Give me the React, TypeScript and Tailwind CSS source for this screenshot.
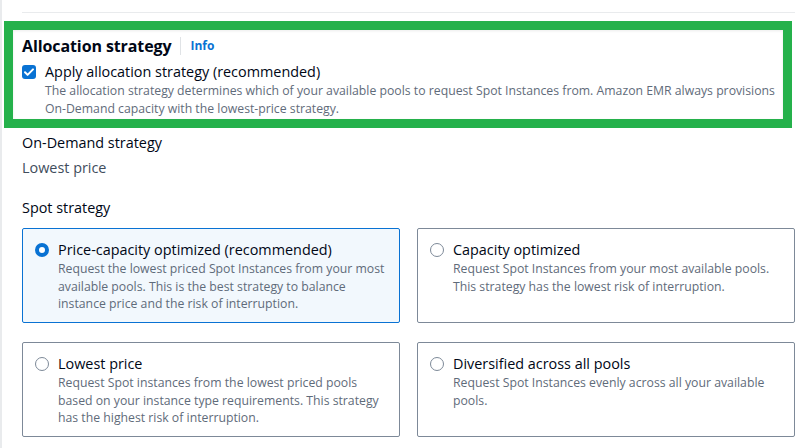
import { useState } from 'react';

interface StrategyOption {
  id: string;
  title: string;
  description: string;
}

const options: StrategyOption[] = [
  {
    id: 'price-capacity',
    title: 'Price-capacity optimized (recommended)',
    description:
      'Request the lowest priced Spot Instances from your most available pools. This is the best strategy to balance instance price and the risk of interruption.',
  },
  {
    id: 'capacity',
    title: 'Capacity optimized',
    description:
      'Request Spot Instances from your most available pools. This strategy has the lowest risk of interruption.',
  },
  {
    id: 'lowest-price',
    title: 'Lowest price',
    description:
      'Request Spot instances from the lowest priced pools based on your instance type requirements. This strategy has the highest risk of interruption.',
  },
  {
    id: 'diversified',
    title: 'Diversified across all pools',
    description: 'Request Spot Instances evenly across all your available pools.',
  },
];

function Radio({ checked }: { checked: boolean }) {
  return checked ? (
    <span className="mt-[3px] box-border size-[14px] shrink-0 rounded-full border-[4px] border-[#0972d3] bg-white" />
  ) : (
    <span className="mt-[3px] box-border size-[14px] shrink-0 rounded-full border-[1.5px] border-[#7d8998] bg-white" />
  );
}

export default function App() {
  const [selected, setSelected] = useState('price-capacity');
  const [apply, setApply] = useState(true);

  return (
    <div
      className="relative h-[448px] w-[809px] overflow-hidden border-l-2 border-[#e9ebed] bg-white text-[#000716]"
      style={{ fontFamily: '"Open Sans", "Noto Sans", Arial, sans-serif' }}
    >
      <div className="ml-[20px] mt-[12px] h-px w-[773px] bg-[#e9ebed]" />

      {/* Highlighted allocation strategy block */}
      <div className="ml-[2px] mt-[8px] w-[788px] border-[9px] border-[#25b14b] bg-white pb-px pl-[9px] pt-[5px] shadow-[inset_0_1px_3px_rgba(0,0,0,0.08)]">
        <div className="flex h-[22px] items-center">
          <h2 className="text-[16px] font-bold leading-[20px] tracking-[-0.1px]">Allocation strategy</h2>
          <span className="ml-[9px] mr-[9px] h-[18px] w-px bg-[#e0e3e6]" />
          <a className="text-[12px] font-bold leading-[16px] text-[#0972d3]">Info</a>
        </div>
        <label className="mt-[5px] flex cursor-pointer gap-[9px]" onClick={() => setApply(!apply)}>
          <span
            className={`mt-[3px] flex size-[14px] shrink-0 items-center justify-center rounded-[3px] ${
              apply ? 'bg-[#0972d3]' : 'border-2 border-[#7d8998] bg-white'
            }`}
          >
            {apply && (
              <svg viewBox="0 0 14 14" className="size-[14px]" fill="none">
                <path d="M3 7.3l2.6 2.6L11 4.4" stroke="white" strokeWidth="2" strokeLinecap="round" strokeLinejoin="round" />
              </svg>
            )}
          </span>
          <span>
            <span className="block text-[14.4px] leading-[20px]">Apply allocation strategy (recommended)</span>
            <span className="block text-[12.25px] leading-[18px] text-[#5f6b7a]">
              The allocation strategy determines which of your available pools to request Spot Instances from. Amazon EMR always provisions
              <br />
              On-Demand capacity with the lowest-price strategy.
            </span>
          </span>
        </label>
      </div>

      <div className="ml-[20px] mt-[5px] text-[14.4px] leading-[20px]">
        <div>On-Demand strategy</div>
        <div className="mt-[5px] text-[#414d5c]">Lowest price</div>
        <div className="mt-[20px]">Spot strategy</div>
      </div>

      <div className="ml-[20px] mt-[10px] grid w-[773px] grid-cols-2 gap-x-[17px] gap-y-[19px]">
        {options.map((opt) => {
          const checked = selected === opt.id;
          return (
            <button
              key={opt.id}
              onClick={() => setSelected(opt.id)}
              className={`flex h-[95px] gap-[9px] rounded-[2px] border pl-[12px] pr-[8px] pt-[11px] text-left ${
                checked ? 'border-[#0972d3] bg-[#f2f8fd]' : 'border-[#7d8998] bg-white'
              }`}
            >
              <Radio checked={checked} />
              <span>
                <span className="block text-[14.4px] leading-[20px]">{opt.title}</span>
                <span className="block text-[12.25px] leading-[17.5px] text-[#5f6b7a]">{opt.description}</span>
              </span>
            </button>
          );
        })}
      </div>
    </div>
  );
}
